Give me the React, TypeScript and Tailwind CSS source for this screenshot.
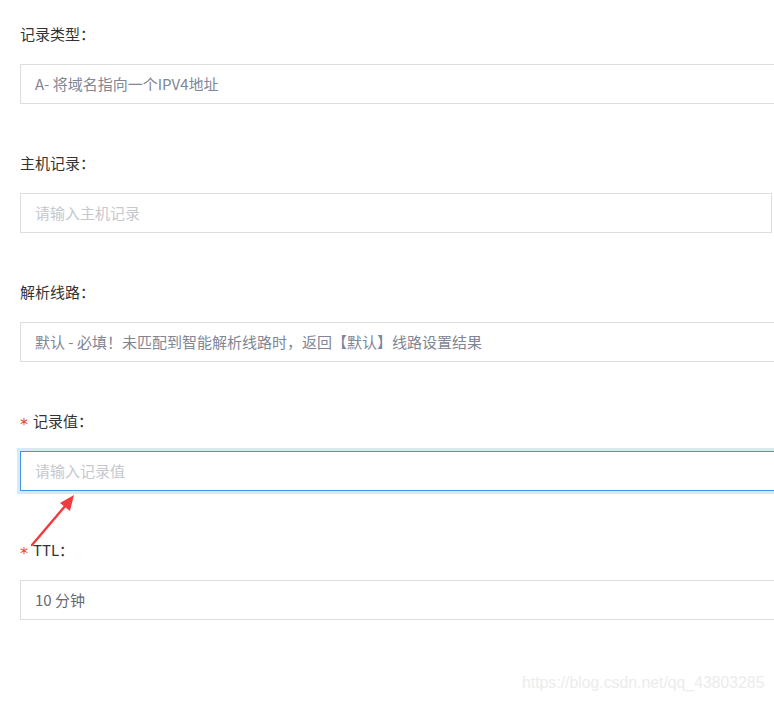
import React from "react";

const font = { fontFamily: '"Noto Sans CJK SC", "Noto Sans", sans-serif' };

function Label({ text, required }: { text: string; required?: boolean }) {
  return (
    <div className="h-[20px] flex items-center text-[15px] leading-[20px] text-[#333333]">
      {required && (
        <span
          className="text-[#ed4014] text-[16px] leading-none mr-[6px] w-[7px] inline-block translate-y-[4px]"
          style={{ fontFamily: '"DejaVu Sans", sans-serif' }}
        >
          *
        </span>
      )}
      <span>{text}</span>
    </div>
  );
}

export default function App() {
  return (
    <div
      className="relative w-[774px] h-[703px] overflow-hidden bg-white pt-[24px] pl-[20px]"
      style={font}
    >
      <div className="mb-[49px]">
        <Label text="记录类型：" />
        <div className="mt-[20px] h-[40px] w-[800px] border border-[#dcdee2] flex items-center pl-[14px] text-[15px] text-[#808695]">
          A- 将域名指向一个IPV4地址
        </div>
      </div>

      <div className="mb-[49px]">
        <Label text="主机记录：" />
        <div className="mt-[20px] h-[40px] w-[752px] border border-[#dcdee2] flex items-center pl-[14px] text-[15px] text-[#c5c8ce]">
          请输入主机记录
        </div>
      </div>

      <div className="mb-[49px]">
        <Label text="解析线路：" />
        <div className="mt-[20px] h-[40px] w-[800px] border border-[#dcdee2] flex items-center pl-[14px] text-[15px] text-[#808695]">
          默认 - 必填！未匹配到智能解析线路时，返回【默认】线路设置结果
        </div>
      </div>

      <div className="mb-[49px]">
        <Label text="记录值：" required />
        <div className="mt-[20px] h-[40px] w-[800px] border border-[#3d96ea] shadow-[0_0_0_3px_#dbe9f7] flex items-center pl-[14px] text-[15px] text-[#c5c8ce]">
          请输入记录值
        </div>
      </div>

      <div className="mb-[49px]">
        <Label text="TTL：" required />
        <div className="mt-[20px] h-[40px] w-[800px] border border-[#dcdee2] flex items-center pl-[14px] text-[15px] text-[#666b73]">
          10 分钟
        </div>
      </div>

      <svg className="absolute left-0 top-0 pointer-events-none" width="774" height="703">
        <line x1="32" y1="545" x2="66" y2="505" stroke="#f03c3c" strokeWidth="2.4" strokeLinecap="round" />
        <polygon points="74,495 60,503 70,511" fill="#f03c3c" />
      </svg>

      <div
        className="absolute left-[522px] top-[673px] text-[15.8px] leading-[20px] text-[#ececec]"
        style={{ fontFamily: '"Liberation Sans", Arial, sans-serif' }}
      >
        https://blog.csdn.net/qq_43803285
      </div>
    </div>
  );
}
